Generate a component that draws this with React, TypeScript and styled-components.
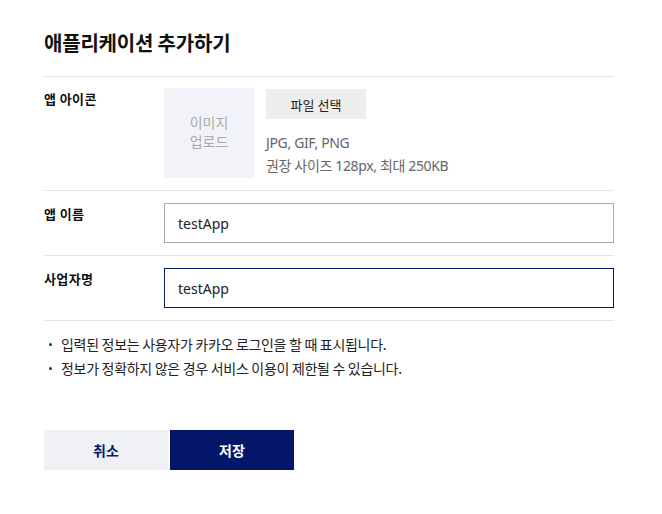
import React from "react";
import styled, { createGlobalStyle } from "styled-components";

const Global = createGlobalStyle`
  html, body { margin: 0; padding: 0; background: #fff; }
  body {
    font-family: "Noto Sans", "Noto Sans CJK KR", sans-serif;
    color: #222;
    -webkit-font-smoothing: antialiased;
  }
  * { box-sizing: border-box; }
`;

const Page = styled.div`
  width: 662px;
  padding: 29px 48px 40px 44px;
`;

const Title = styled.h1`
  margin: 0 0 19px;
  font-size: 20px;
  line-height: 28px;
  font-weight: 700;
  color: #111;
  letter-spacing: -0.2px;
  font-family: "Noto Sans CJK KR", sans-serif;
`;

const Row = styled.div<{ $top?: number }>`
  display: flex;
  align-items: flex-start;
  border-top: 1px solid #e5e5e5;
  padding: ${(p) => p.$top ?? 12}px 0 12px;
`;

const Label = styled.div`
  width: 120px;
  flex: none;
  font-family: "Noto Sans CJK KR", sans-serif;
  font-size: 13px;
  font-weight: 700;
  line-height: 20px;
  letter-spacing: 0.4px;
  color: #111;
  padding-top: 1px;
`;

const Field = styled.div`
  flex: 1;
  display: flex;
  align-items: flex-start;
`;

const ImageBox = styled.div`
  width: 90px;
  height: 90px;
  background: #f2f3f8;
  display: flex;
  align-items: center;
  justify-content: center;
  text-align: center;
  font-family: "Noto Sans CJK KR", sans-serif;
  font-size: 14px;
  line-height: 19px;
  color: #aaa;
  padding-bottom: 2px;
`;

const FileInfo = styled.div`
  margin-left: 12px;
  padding-top: 1px;
`;

const FileButton = styled.button`
  width: 100px;
  height: 30px;
  border: none;
  background: #eeeeee;
  font-family: "Noto Sans CJK KR", sans-serif;
  font-size: 13px;
  color: #222;
  padding: 0;
  cursor: pointer;
`;

const Hint = styled.div`
  margin-top: 12px;
  font-family: "Noto Sans", "Noto Sans CJK KR", sans-serif;
  font-size: 14px;
  line-height: 23px;
  color: #666;
  letter-spacing: -0.35px;
`;

const Input = styled.input<{ $focused?: boolean }>`
  width: 100%;
  height: 40px;
  border: 1px solid ${(p) => (p.$focused ? "#0a1a6a" : "#aaaaaa")};
  padding: 0 13px;
  font-family: "Noto Sans", "Noto Sans CJK KR", sans-serif;
  font-size: 14px;
  color: #222;
  outline: none;
  background: #fff;
`;

const Notes = styled.ul`
  list-style: none;
  margin: 0;
  padding: 11px 0 0;
  border-top: 1px solid #e5e5e5;
`;

const Note = styled.li`
  position: relative;
  padding-left: 17px;
  font-family: "Noto Sans CJK KR", sans-serif;
  font-size: 14px;
  line-height: 24px;
  color: #222;
  letter-spacing: -0.3px;
  &::before {
    content: "";
    position: absolute;
    left: 5px;
    top: 11px;
    width: 3px;
    height: 3px;
    border-radius: 50%;
    background: #333;
  }
`;

const Actions = styled.div`
  display: flex;
  gap: 2px;
  margin-top: 50px;
`;

const ActionButton = styled.button<{ $primary?: boolean }>`
  width: 124px;
  height: 40px;
  border: none;
  padding: 0;
  font-family: "Noto Sans CJK KR", sans-serif;
  font-size: 14px;
  font-weight: 700;
  background: ${(p) => (p.$primary ? "#03166a" : "#f0f1f7")};
  color: ${(p) => (p.$primary ? "#fff" : "#0a1a6a")};
  cursor: pointer;
`;

export default function App() {
  return (
    <>
      <Global />
      <Page>
        <Title>애플리케이션 추가하기</Title>
        <Row $top={11}>
          <Label>앱 아이콘</Label>
          <Field>
            <ImageBox>
              이미지
              <br />
              업로드
            </ImageBox>
            <FileInfo>
              <FileButton>파일 선택</FileButton>
              <Hint>
                JPG, GIF, PNG
                <br />
                권장 사이즈 128px, 최대 250KB
              </Hint>
            </FileInfo>
          </Field>
        </Row>
        <Row>
          <Label>앱 이름</Label>
          <Field>
            <Input defaultValue="testApp" />
          </Field>
        </Row>
        <Row>
          <Label>사업자명</Label>
          <Field>
            <Input $focused defaultValue="testApp" />
          </Field>
        </Row>
        <Notes>
          <Note>입력된 정보는 사용자가 카카오 로그인을 할 때 표시됩니다.</Note>
          <Note>정보가 정확하지 않은 경우 서비스 이용이 제한될 수 있습니다.</Note>
        </Notes>
        <Actions>
          <ActionButton>취소</ActionButton>
          <ActionButton $primary>저장</ActionButton>
        </Actions>
      </Page>
    </>
  );
}
